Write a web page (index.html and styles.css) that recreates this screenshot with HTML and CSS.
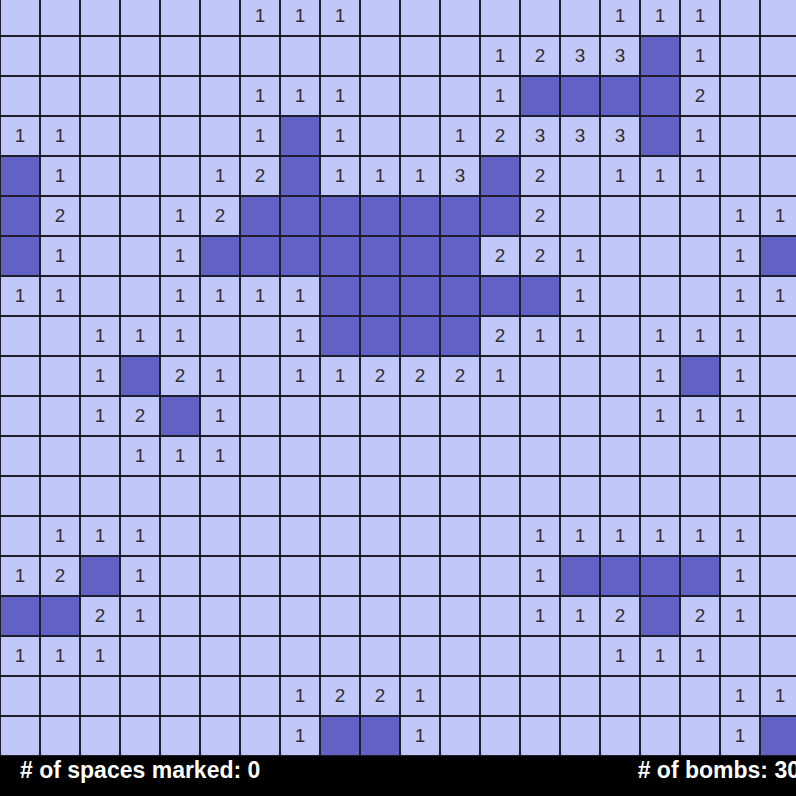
FILE: index.html
```html
<!DOCTYPE html>
<html>
<head>
<meta charset="UTF-8">
<title>minesweeper</title>
<link rel="stylesheet" href="styles.css">
</head>
<body>
<div class="board" id="board"></div>

<div class="status">
	<span class="marked"># of spaces marked: 0</span>
	<span class="bombs"># of bombs: 30</span>
</div>

<script>
// . = closed, x = open (empty), digit = neighbour count
var rows = [
	"......111......111..",
	"............1233x1..",
	"......111...1xxxx2..",
	"11....1x1..12333x1..",
	"x1...12x1113x2.111..",
	"x2..12xxxxxxx2....11",
	"x1..1xxxxxxx221...1x",
	"11..1111xxxxxx1...11",
	"..111..1xxxx211.111.",
	"..1x21.112221...1x1.",
	"..12x1..........111.",
	"...111..............",
	"....................",
	".111.........111111.",
	"12x1.........1xxxx1.",
	"xx21.........112x21.",
	"111............111..",
	".......1221.......11",
	".......1xx1.......1x"
];
var board = document.getElementById("board");
for (var r = 0; r < rows.length; r++) {
	for (var c = 0; c < rows[r].length; c++) {
		var ch = rows[r].charAt(c);
		var cell = document.createElement("div");
		cell.className = "cell";
		if (ch == "x") {
			cell.className += " open";
		} else if (ch != ".") {
			cell.textContent = ch;
		}
		board.appendChild(cell);
	}
}
</script>
</body>
</html>
```

FILE: styles.css
```css
html, body {
  margin: 0;
  background-color: black;
  overflow: hidden;
}
.board {
  display: grid;
  grid-template-columns: repeat(20, 40px);
  grid-auto-rows: 40px;
  width: 800px;
  margin-top: -4px; /* page is scrolled a little */
}
.cell {
  box-sizing: border-box;
  border: 1px solid #1c1c2a;
  background-color: #c1c8f9;
  color: #2e2e2e;
  font-family: "Liberation Sans", Arial, sans-serif;
  font-size: 19px;
  display: flex;
  align-items: center;
  justify-content: center;
}
.cell.open {
  background-color: #6262c6;
}
.status {
  display: flex;
  justify-content: space-between;
  width: 780px;
  height: 40px;
  padding-left: 20px;
  color: white;
  font-family: "Liberation Sans", Arial, sans-serif;
  font-weight: bold;
  font-size: 23px;
  line-height: 28px;
  white-space: nowrap;
}
```
